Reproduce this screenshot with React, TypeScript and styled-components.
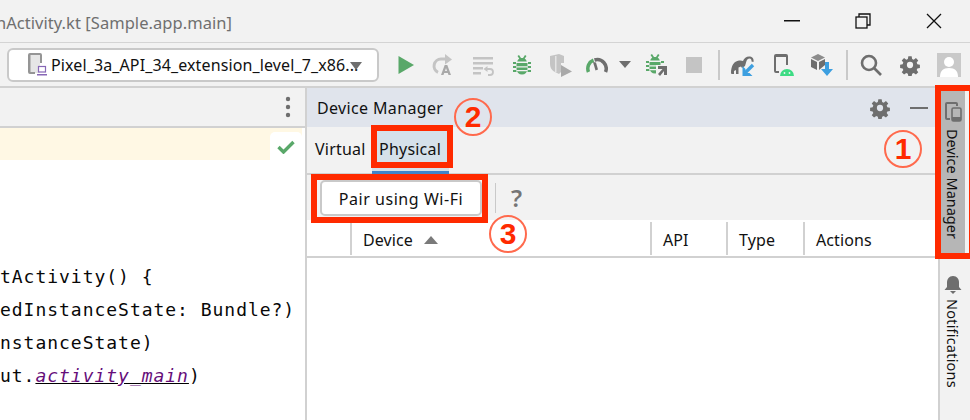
import React from "react";
import styled, { createGlobalStyle } from "styled-components";

const Global = createGlobalStyle`
  html, body { margin: 0; padding: 0; background: #fff; }
  * { box-sizing: border-box; }
`;

const UI = `"Noto Sans", "Open Sans", sans-serif`;

const Frame = styled.div`
  position: relative;
  width: 970px;
  height: 420px;
  overflow: hidden;
  font-family: ${UI};
  font-size: 16px;
  color: #111;
  background: #fff;
  display: flex;
  flex-direction: column;
`;
const TitleBar = styled.header`
  height: 43px;
  flex: none;
  background: #f2f2f2;
  border-bottom: 1px solid #d4d4d4;
  display: flex;
  align-items: center;
`;
const TitleText = styled.div`
  width: 232px;
  padding-top: 3px;
  overflow: hidden;
  white-space: nowrap;
  display: flex;
  justify-content: flex-end;
  color: #6f6f6f;
  font-size: 16.5px;
  letter-spacing: 0.05px;
`;
const WindowControls = styled.div`
  margin-left: auto;
  display: flex;
  margin-right: 1px;
`;
const WinButton = styled.div`
  width: 71px;
  height: 42px;
  display: flex;
  align-items: center;
  justify-content: center;
`;
const Toolbar = styled.div`
  height: 43px;
  flex: none;
  background: #f2f2f2;
  display: flex;
  align-items: center;
  padding-left: 7px;
`;
const Combo = styled.div`
  width: 372px;
  height: 34px;
  margin-top: 1px;
  margin-right: 8px;
  flex: none;
  background: #fff;
  border: 2px solid #c9c9c9;
  border-radius: 6px;
  display: flex;
  align-items: center;
  padding-left: 18px;
  position: relative;
`;
const ComboLabel = styled.span`
  margin-left: 4px;
  font-size: 16px;
  white-space: nowrap;
  letter-spacing: 0.12px;
`;
const ComboArrow = styled.span`
  position: absolute;
  left: 341px;
  top: 12px;
  width: 0;
  height: 0;
  border-left: 6px solid transparent;
  border-right: 6px solid transparent;
  border-top: 8px solid #6e6e6e;
`;
const Slot = styled.div<{ $w: number }>`
  width: ${(p) => p.$w}px;
  flex: none;
  display: flex;
  align-items: center;
  justify-content: center;
`;
const ToolSep = styled.div`
  width: 2px;
  height: 30px;
  background: #c9c9c9;
`;
const Body = styled.div`
  flex: 1;
  min-height: 0;
  display: flex;
  border-top: 2px solid #d1d1d1;
`;
const Editor = styled.section`
  width: 307px;
  flex: none;
  border-right: 2px solid #d1d1d1;
  display: flex;
  flex-direction: column;
  position: relative;
`;
const EditorTabs = styled.div`
  height: 40px;
  flex: none;
  background: #f2f2f2;
  border-bottom: 2px solid #d1d1d1;
  display: flex;
  align-items: center;
  justify-content: flex-end;
  padding-right: 14px;
`;
const CaretLine = styled.div`
  height: 32px;
  flex: none;
  margin-right: 3px;
  background: #fff8e4;
`;
const CheckChip = styled.div`
  position: absolute;
  left: 270px;
  top: 44px;
  width: 32px;
  height: 30px;
  background: #fff;
  border-radius: 5px 5px 0 0;
  display: flex;
  align-items: center;
  justify-content: center;
`;
const Code = styled.div`
  padding-top: 100px;
  font-family: "DejaVu Sans Mono", "Liberation Mono", monospace;
  font-size: 18px;
  letter-spacing: 0.97px;
  line-height: 33px;
  color: #080808;
  white-space: pre;
`;
const CodeLine = styled.div`
  height: 33px;
`;
const Ref = styled.span`
  color: #660e7a;
  font-style: italic;
  text-decoration: underline;
  text-decoration-color: #000;
`;
const Panel = styled.section`
  flex: 1;
  min-width: 0;
  display: flex;
  flex-direction: column;
`;
const PanelHeader = styled.div`
  height: 39px;
  flex: none;
  background: #e0e4ec;
  display: flex;
  align-items: center;
  padding-left: 10px;
`;
const PanelTitle = styled.div`
  font-size: 16px;
  letter-spacing: 0.35px;
  margin-right: auto;
`;
const HeaderAction = styled.div<{ $w: number }>`
  width: ${(p) => p.$w}px;
  display: flex;
  justify-content: center;
  align-items: center;
`;
const TabBar = styled.div`
  height: 48px;
  flex: none;
  background: #f2f2f2;
  border-bottom: 2px solid #d1d1d1;
  display: flex;
  padding-left: 3px;
`;
const Tab = styled.div<{ $active?: boolean }>`
  height: 48px;
  padding: 0 ${(p) => (p.$active ? 7 : 5)}px 0;
  width: ${(p) => (p.$active ? "77px" : "auto")};
  margin-right: ${(p) => (p.$active ? 0 : 1)}px;
  display: flex;
  align-items: center;
  justify-content: center;
  font-size: 16px;
  letter-spacing: 0.2px;
  background: ${(p) => (p.$active ? "#d5e1ea" : "transparent")};
  border-bottom: ${(p) => (p.$active ? "4px solid #4083c9" : "4px solid transparent")};
`;
const ActionBar = styled.div`
  height: 45px;
  flex: none;
  background: #f2f2f2;
  display: flex;
  align-items: center;
  padding-left: 13px;
`;
const PairButton = styled.button`
  width: 162px;
  height: 36px;
  background: #fff;
  border: 2px solid #c9c9c9;
  border-radius: 5px;
  font-family: ${UI};
  font-size: 16px;
  letter-spacing: 0.55px;
  color: #111;
  padding: 2px 0 0;
  margin-right: 13px;
`;
const BarSep = styled.div`
  width: 1px;
  height: 30px;
  background: #c9c9c9;
  margin-right: 15px;
`;
const Help = styled.div`
  font-size: 24px;
  font-weight: 600;
  color: #757575;
  line-height: 1;
`;
const TableHead = styled.div`
  height: 38px;
  flex: none;
  background: #fff;
  border-bottom: 2px solid #d1d1d1;
  display: grid;
  grid-template-columns: 43px 300px 76px 77px 1fr;
  align-items: center;
`;
const HeadCell = styled.div`
  height: 33px;
  border-left: 2px solid #d1d1d1;
  display: flex;
  align-items: center;
  padding: 3px 0 0 11px;
  font-size: 16px;
  letter-spacing: 0.1px;
  &:first-child { border-left: 0; }
`;
const SortUp = styled.span`
  margin-left: 11px;
  width: 0;
  height: 0;
  border-left: 7px solid transparent;
  border-right: 7px solid transparent;
  border-bottom: 8px solid #7a7a7a;
`;
const Stripe = styled.aside`
  width: 32px;
  flex: none;
  background: #f2f2f2;
  border-left: 2px solid #d1d1d1;
  display: flex;
  flex-direction: column;
  padding-top: 3px;
`;
const StripeButton = styled.div<{ $active?: boolean }>`
  width: 24px;
  margin-left: 1px;
  height: ${(p) => (p.$active ? 162 : 125)}px;
  margin-bottom: ${(p) => (p.$active ? 22 : 0)}px;
  background: ${(p) => (p.$active ? "#b6b6b6" : "transparent")};
  display: flex;
  flex-direction: column;
  align-items: center;
  padding-top: ${(p) => (p.$active ? 11 : 0)}px;
  gap: ${(p) => (p.$active ? 7 : 4)}px;
`;
const StripeLabel = styled.span<{ $spacing: number }>`
  writing-mode: vertical-rl;
  font-size: 14.5px;
  letter-spacing: ${(p) => p.$spacing}px;
  line-height: 24px;
  white-space: nowrap;
`;
const RedBox = styled.div<{ $x: number; $y: number; $w: number; $h: number }>`
  position: absolute;
  left: ${(p) => p.$x}px;
  top: ${(p) => p.$y}px;
  width: ${(p) => p.$w}px;
  height: ${(p) => p.$h}px;
  border: 6px solid #ff2a00;
  pointer-events: none;
`;
const Step = styled.div<{ $x: number; $y: number }>`
  position: absolute;
  left: ${(p) => p.$x - 19}px;
  top: ${(p) => p.$y - 19}px;
  width: 38px;
  height: 38px;
  border: 2px solid #ff6a4d;
  border-radius: 50%;
  display: flex;
  align-items: center;
  justify-content: center;
  color: #ff2a00;
  font-family: "Liberation Sans", sans-serif;
  font-size: 30px;
  font-weight: 700;
  line-height: 1;
`;

const Gear = ({ size = 22, color = "#6e6e6e" }: { size?: number; color?: string }) => (
  <svg width={size} height={size} viewBox="0 0 24 24">
    <path
      fill={color}
      fillRule="evenodd"
      d="M10 1.5h4l.6 3.2 1.9.8 2.7-1.9 2.8 2.8-1.9 2.7.8 1.9 3.1.6v4l-3.1.6-.8 1.9 1.9 2.7-2.8 2.8-2.7-1.9-1.9.8-.6 3.2h-4l-.6-3.2-1.9-.8-2.7 1.9-2.8-2.8 1.9-2.7-.8-1.9-3.1-.6v-4l3.1-.6.8-1.9-1.9-2.7 2.8-2.8 2.7 1.9 1.900-.8zM12 8.200a3.800 3.800 0 1 0 0 7.600 3.800 3.800 0 0 0 0-7.600z"
      transform="translate(1.2 1.2) scale(.9)"
    />
  </svg>
);

const Bug = ({ color = "#59a869" }: { color?: string }) => (
  <g fill={color}>
    <path d="M4.500 1l1.500-1 2 3h2l2-3 1.500 1-1.800 2.800C13 4.500 13.500 5.500 13.800 6.500H4.200C4.500 5.500 5 4.500 6.300 3.800z" />
    <path d="M3.500 8h11v6a5.500 5.500 0 0 1-11 0z" />
    <path d="M0 7h3v2H0zM15 7h3v2h-3zM0 11h3v2H0zM15 11h3v2h-3zM0 15h3.500v2H0zM14.500 15H18v2h-3.500z" />
    <path d="M3.500 11.300h11v1.200h-11zM3.500 15h11v1.200h-11z" fill="#f2f2f2" />
  </g>
);

const DeviceIcon = () => (
  <svg width="20" height="26" viewBox="0 0 20 26">
    <rect x="2" y="3" width="11" height="18" fill="#e6e6e6" />
    <path d="M3 1h10a2 2 0 0 1 2 2v8h-2V3H3.500v17H8v2H3a2 2 0 0 1-2-2V3a2 2 0 0 1 2-2z" fill="#959595" />
    <rect x="11.500" y="14.500" width="7" height="5.500" fill="#fff" stroke="#8767b6" strokeWidth="1.200" />
    <rect x="10" y="22" width="10" height="1.500" fill="#8767b6" />
  </svg>
);

export default function App() {
  return (
    <Frame>
      <Global />
      <TitleBar>
        <TitleText>
          <span>nActivity.kt [Sample.app.main]</span>
        </TitleText>
        <WindowControls>
          <WinButton>
            <svg width="16" height="2"><rect width="16" height="1.500" fill="#111" /></svg>
          </WinButton>
          <WinButton>
            <svg width="16" height="16" viewBox="0 0 16 16" fill="none" stroke="#111" strokeWidth="1.300">
              <rect x="1" y="4" width="11" height="11" />
              <path d="M4 4V1h11v11h-3" />
            </svg>
          </WinButton>
          <WinButton>
            <svg width="16" height="16" viewBox="0 0 16 16" stroke="#111" strokeWidth="1.300">
              <path d="M1 1l14 14M15 1L1 15" />
            </svg>
          </WinButton>
        </WindowControls>
      </TitleBar>

      <Toolbar>
        <Combo>
          <DeviceIcon />
          <ComboLabel>Pixel_3a_API_34_extension_level_7_x86...</ComboLabel>
          <ComboArrow />
        </Combo>
        <Slot $w={38}>
          <svg width="16" height="18" viewBox="0 0 16 18"><path d="M0.500 0L16 9 .5 18z" fill="#59a869" /></svg>
        </Slot>
        <Slot $w={36}>
          <svg width="22" height="22" viewBox="0 0 22 22">
            <path d="M14 5H9a7 7 0 0 0-3 13.300" fill="none" stroke="#c4c4c4" strokeWidth="3" />
            <path d="M13 0l7 5.500-7 5z" fill="#c4c4c4" />
            <path d="M9 21l3.700-10h2.600L19 21h-2.500l-.7-2h-3.600l-.7 2zM13 17h2l-1-3z" fill="#a9a9a9" />
          </svg>
        </Slot>
        <Slot $w={46}>
          <svg width="22" height="22" viewBox="0 0 22 22" fill="#c4c4c4">
            <rect x="0" y="3" width="20" height="2.500" />
            <rect x="0" y="8" width="20" height="2.500" />
            <rect x="0" y="13" width="10" height="2.500" />
            <rect x="0" y="18" width="8" height="2.500" />
            <path d="M12 15h5a3 3 0 0 1 0 6h-2" fill="none" stroke="#c4c4c4" strokeWidth="1.800" />
            <path d="M14.500 12v6l-4-3z" />
          </svg>
        </Slot>
        <Slot $w={30}>
          <svg width="18" height="20" viewBox="0 0 18 20"><Bug /></svg>
        </Slot>
        <Slot $w={48}>
          <svg width="24" height="24" viewBox="0 0 24 24">
            <path d="M1 3l9-2 5 2v7H12v9l-2 2-4-2c-4-2-5-5-5-9z" fill="#c4c4c4" />
            <path d="M12 12l11 6.500L12 24z" fill="#a9a9a9" />
            <path d="M6 3h1.500v16H6z" fill="#e4e4e4" />
          </svg>
        </Slot>
        <Slot $w={24}>
          <svg width="22" height="16" viewBox="0 0 22 16">
            <path d="M2.500 15a9 9 0 0 1 5-11.800" fill="none" stroke="#59a869" strokeWidth="3.500" />
            <path d="M8.500 3a9 9 0 0 1 11 12" fill="none" stroke="#6e6e6e" strokeWidth="3.500" />
            <path d="M7 5l3 .5 2 7-2.500 1z" fill="#6e6e6e" />
          </svg>
        </Slot>
        <Slot $w={32}>
          <svg width="12" height="7" viewBox="0 0 12 7"><path d="M0 0h12L6 7z" fill="#6e6e6e" /></svg>
        </Slot>
        <Slot $w={32}>
          <svg width="22" height="22" viewBox="0 0 22 22">
            <Bug />
            <path d="M10 11h12v11H10z" fill="#f2f2f2" />
            <path d="M12 12h9v9h-3v-4l-4 5-2-2 4.500-5H12z" fill="#6e6e6e" />
          </svg>
        </Slot>
        <Slot $w={42}>
          <svg width="16" height="16"><rect width="16" height="16" fill="#c4c4c4" /></svg>
        </Slot>
        <Slot $w={8}>
          <ToolSep />
        </Slot>
        <Slot $w={40}>
          <svg width="24" height="22" viewBox="0 0 24 22">
            <path d="M0 19C0 12 3 7 8 6.500c2-.3 3 0 4 .5 1-3 4-5 7-4.500 3 .5 4 3 3.500 5.500l-2-.5c.3-1.500-.5-3-2-3-1.500 0-2.500 1-3 2.500L14 12l-3 2-1-1.500-2.500 1V20H5v-4l-2 1v3H.5z" fill="#6e6e6e" />
            <path d="M22 11L14 19" stroke="#3d9fe0" strokeWidth="3.400" fill="none" />
            <path d="M11.500 12v10h10l-3-3h-4v-4l-3-3z" fill="#3d9fe0" />
          </svg>
        </Slot>
        <Slot $w={42}>
          <svg width="20" height="22" viewBox="0 0 20 22">
            <path d="M2 0h10a2 2 0 0 1 2 2v9h-2V3H2v14h3v2H2a2 2 0 0 1-2-2V2a2 2 0 0 1 2-2z" fill="#6e6e6e" />
            <path d="M6 22a7 7 0 0 1 14 0z" fill="#3ddc84" />
            <circle cx="10.500" cy="19" r=".9" fill="#f2f2f2" /><circle cx="15.500" cy="19" r=".9" fill="#f2f2f2" />
          </svg>
        </Slot>
        <Slot $w={34}>
          <svg width="24" height="22" viewBox="0 0 24 22">
            <path d="M8 0l7 3.500L8 7 1 3.500z" fill="#8c8c8c" />
            <path d="M1 5l6 3v8l-6-3z" fill="#6e6e6e" />
            <path d="M9 8l6-3v6l-6 5z" fill="#6e6e6e" />
            <path d="M15 8h4v7h4l-6 7-6-7h4z" fill="#3d9fe0" />
          </svg>
        </Slot>
        <Slot $w={16}>
          <ToolSep />
        </Slot>
        <Slot $w={32}>
          <svg width="22" height="22" viewBox="0 0 22 22" fill="none" stroke="#6e6e6e" strokeWidth="2.600">
            <circle cx="9" cy="9" r="7" />
            <path d="M14 14l7 7" />
          </svg>
        </Slot>
        <Slot $w={46}>
          <Gear size={22} />
        </Slot>
        <Slot $w={32}>
          <svg width="24" height="24" viewBox="0 0 24 24">
            <rect width="24" height="24" fill="#c9c9c9" />
            <circle cx="12" cy="9" r="5" fill="#fff" />
            <path d="M3 24c0-6 3-9 9-9s9 3 9 9z" fill="#fff" />
          </svg>
        </Slot>
      </Toolbar>

      <Body>
        <Editor>
          <EditorTabs>
            <svg width="6" height="22" viewBox="0 0 6 22" fill="#6e6e6e">
              <circle cx="3" cy="3" r="2.200" /><circle cx="3" cy="11" r="2.200" /><circle cx="3" cy="19" r="2.200" />
            </svg>
          </EditorTabs>
          <CaretLine />
          <CheckChip>
            <svg width="18" height="14" viewBox="0 0 18 14">
              <path d="M1.500 7l5 5L16.500 2" fill="none" stroke="#59a869" strokeWidth="3.400" />
            </svg>
          </CheckChip>
          <Code>
            <CodeLine>tActivity() {"{"}</CodeLine>
            <CodeLine>edInstanceState: Bundle?)</CodeLine>
            <CodeLine>nstanceState)</CodeLine>
            <CodeLine>
              ut.<Ref>activity_main</Ref>)
            </CodeLine>
          </Code>
        </Editor>

        <Panel>
          <PanelHeader>
            <PanelTitle>Device Manager</PanelTitle>
            <HeaderAction $w={40}>
              <Gear size={22} />
            </HeaderAction>
            <HeaderAction $w={38}>
              <svg width="18" height="2"><rect width="18" height="2" fill="#6e6e6e" /></svg>
            </HeaderAction>
          </PanelHeader>
          <TabBar>
            <Tab>Virtual</Tab>
            <Tab $active>Physical</Tab>
          </TabBar>
          <ActionBar>
            <PairButton>Pair using Wi-Fi</PairButton>
            <BarSep />
            <Help>?</Help>
          </ActionBar>
          <TableHead>
            <HeadCell />
            <HeadCell>
              Device
              <SortUp />
            </HeadCell>
            <HeadCell>API</HeadCell>
            <HeadCell>Type</HeadCell>
            <HeadCell>Actions</HeadCell>
          </TableHead>
        </Panel>

        <Stripe>
          <StripeButton $active>
            <svg width="18" height="20" viewBox="0 0 18 20">
              <path d="M3 0h9a2 2 0 0 1 2 2v2h-2V2H3v14h3v2H3a2 2 0 0 1-2-2V2a2 2 0 0 1 2-2z" fill="#6e6e6e" />
              <rect x="8" y="6" width="9" height="13" rx="1.500" fill="none" stroke="#6e6e6e" strokeWidth="1.600" />
              <rect x="8" y="15" width="9" height="4" fill="#6e6e6e" />
            </svg>
            <StripeLabel $spacing={0}>Device Manager</StripeLabel>
          </StripeButton>
          <StripeButton>
            <svg width="18" height="20" viewBox="0 0 18 20" fill="#6e6e6e">
              <path d="M9 1c4 0 6 3 6 6.500V12l2.500 3H.5L3 12V7.500C3 4 5 1 9 1z" />
              <path d="M6 16h6l-3 3z" />
            </svg>
            <StripeLabel $spacing={0.2}>Notifications</StripeLabel>
          </StripeButton>
        </Stripe>

        <RedBox $x={935} $y={85} $w={40} $h={174} />
        <RedBox $x={371} $y={125} $w={82} $h={43} />
        <RedBox $x={311} $y={174} $w={177} $h={49} />
        <Step $x={473} $y={117}>2</Step>
        <Step $x={508} $y={234}>3</Step>
        <Step $x={903} $y={149}>1</Step>
      </Body>
    </Frame>
  );
}
